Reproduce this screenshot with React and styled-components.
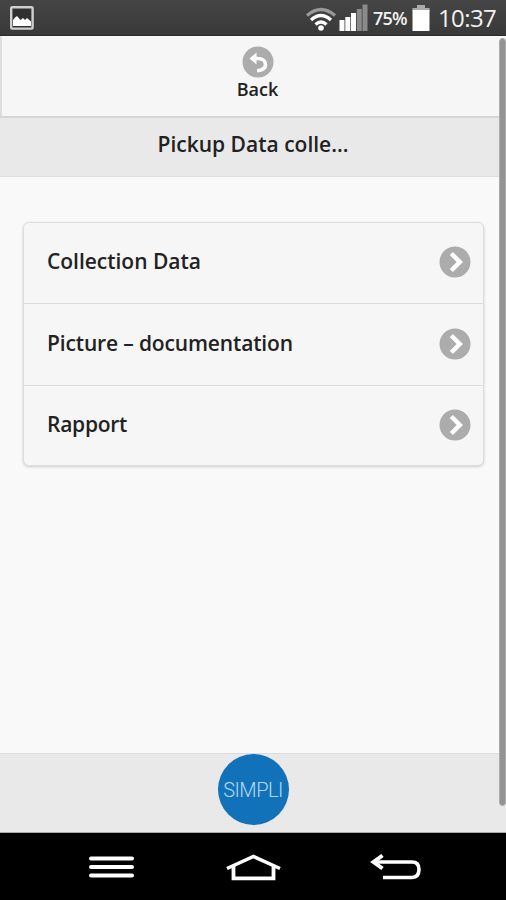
import React from 'react';
import styled, {createGlobalStyle} from 'styled-components';

const GlobalStyle = createGlobalStyle`
  * {
    box-sizing: border-box;
  }

  body {
    margin: 0;
    background: #f9f9f9;
    color: #222;
    font-family: 'Open Sans', 'Noto Sans', sans-serif;
  }
`;

const Screen = styled.div`
  position: relative;
  display: flex;
  flex-direction: column;
  width: 506px;
  height: 900px;
  overflow: hidden;
  background: #f9f9f9;
`;

const StatusBar = styled.header`
  display: flex;
  align-items: center;
  justify-content: space-between;
  height: 36px;
  padding: 0 9px 0 10px;
  background: linear-gradient(#454545, #393939);
  border-bottom: 1px solid #292929;
  color: #f1f1f1;
`;

const StatusGroup = styled.div`
  display: flex;
  align-items: center;
  height: 100%;
`;

const Icon = styled.svg`
  display: block;
  flex: none;
`;

const Text = styled.span`
  display: block;
  font-size: ${props => props.$size}px;
  font-weight: ${props => props.$weight || 600};
  letter-spacing: ${props => props.$spacing || 0}px;
  line-height: ${props => props.$line || 26}px;
  white-space: nowrap;
`;

const Percent = styled(Text)`
  width: 34px;
  margin: 1px 5px 0 5px;
`;

const Clock = styled(Text)`
  width: 59px;
  margin: 1px 0 0 8px;
`;

const BackButton = styled.button`
  display: flex;
  flex-direction: column;
  align-items: center;
  width: 100%;
  height: 80px;
  padding: 9px 0 0 7px;
  border: 0;
  border-top: 1px solid #fcfcfc;
  border-left: 2px solid #dedede;
  background: #f6f6f6;
  color: #222;
  font-family: inherit;
`;

const TitleBar = styled.h1`
  display: flex;
  justify-content: center;
  height: 61px;
  margin: 0;
  padding-top: 13px;
  border-top: 2px solid #d5d5d5;
  border-bottom: 1px solid #dfdfdf;
  background: #e9e9e9;
`;

const Content = styled.main`
  flex: 1;
  padding: 45px 22px 0 23px;
`;

const List = styled.ul`
  margin: 0;
  padding: 0;
  border: 1px solid #dddddd;
  border-radius: 6px;
  background: #f6f6f6;
  box-shadow: 0 1px 3px rgba(0, 0, 0, 0.18);
  list-style: none;
`;

const ListItem = styled.li`
  display: flex;
  align-items: center;
  justify-content: space-between;
  height: ${props => props.$height}px;
  padding: 0 12px 2px 23px;

  & + & {
    border-top: 1px solid #dddddd;
  }
`;

const ItemLabel = styled(Text)`
  padding-bottom: 2px;
`;

const Footer = styled.footer`
  display: flex;
  justify-content: center;
  height: 80px;
  border-top: 1px solid #dcdcdc;
  border-bottom: 1px solid #a8a8a8;
  background: #e9e9e9;
`;

const Logo = styled.div`
  display: flex;
  align-items: center;
  justify-content: center;
  width: 71px;
  height: 71px;
  padding-top: 1px;
  border-radius: 50%;
  background: #1272b9;
  color: #b5d9f4;
  font-family: Roboto, sans-serif;
`;

const NavBar = styled.nav`
  display: flex;
  align-items: center;
  justify-content: space-between;
  height: 67px;
  padding: 0 84px 0 88px;
  background: #000;
`;

const ScrollThumb = styled.div`
  position: absolute;
  top: 38px;
  right: 0;
  width: 7px;
  height: 768px;
  border: 1px solid #ababab;
  border-radius: 4px;
  background: #939393;
`;

const PictureIcon = () => (
  <Icon width="24" height="24" viewBox="0 0 24 24">
    <rect x="1.2" y="1.2" width="21.4" height="21.4" rx="1" fill="#303030" stroke="#cfcfcf" strokeWidth="2.4" />
    <path d="M3 14 5 11.5l2-1.5 3.5 4 2.5-2 2 2 2-2 4 3.500V20H3z" fill="#fff" />
  </Icon>
);

const WifiIcon = () => (
  <Icon width="33" height="36" viewBox="0 0 33 36" fill="none" strokeWidth="3.2">
    <path d="M1 15.5Q15 3.5 29 15.5" stroke="#999" />
    <path d="M5 20Q15 11 25 20M9.5 24.5Q15 19.5 20.5 24.5" stroke="#fff" />
    <circle cx="15" cy="28" r="2.8" fill="#fff" />
  </Icon>
);

const SignalIcon = () => (
  <Icon width="29" height="36" viewBox="0 0 29 36">
    <path d="M.5 20h5v11h-5zM6.3 17h5v14h-5zM12 13h5v18h-5z" fill="#fff" />
    <path d="M17.800 9h5v22h-5zM23.500 4.500h5V31h-5z" fill="#8a8a8a" />
  </Icon>
);

const BatteryIcon = () => (
  <Icon width="18" height="36" viewBox="0 0 18 36">
    <path d="M5 5h8v3h4.5v3H.5V8H5z" fill="#aaa" />
    <path d="M.5 10h17v21H.5z" fill="#fff" />
  </Icon>
);

const BackIcon = () => (
  <Icon width="32" height="32" viewBox="0 0 32 32">
    <circle cx="16" cy="16" r="15.5" fill="#acacac" />
    <path d="M7.5 12.5 14.5 6.500v12z" fill="#fff" />
    <path d="M13 12.500h2.500c5 0 8 2.500 8 6 0 3.500-3.200 5.800-8.500 6.200" fill="none" stroke="#fff" strokeWidth="3.6" />
  </Icon>
);

const ArrowIcon = () => (
  <Icon width="32" height="32" viewBox="0 0 32 32">
    <circle cx="16" cy="16" r="15.5" fill="#acacac" />
    <path d="m12.3 7.5 8.5 8.5-8.5 8.5" fill="none" stroke="#fff" strokeWidth="4.5" />
  </Icon>
);

const MenuIcon = () => (
  <Icon width="47" height="24" viewBox="0 0 47 24" stroke="#fff" strokeLinecap="round">
    <path d="M3 3.5h41M3 12h41M3 20.5h41" strokeWidth="4" />
  </Icon>
);

const HomeIcon = () => (
  <Icon width="56" height="28" viewBox="0 0 56 28" fill="none" stroke="#fff">
    <path d="M2 15.5 28.5 3.5 55 15.5" strokeWidth="3.5" />
    <path d="M8.5 13v12.300h40V13" strokeWidth="3.8" />
  </Icon>
);

const ReturnIcon = () => (
  <Icon width="52" height="28" viewBox="0 0 52 28" fill="none" stroke="#fff">
    <path d="M5 9h37q7 0 7 7.500T42 24.500H13" strokeWidth="3.6" />
    <path d="M12.500 2.500 3.500 9l9 6.500" strokeWidth="4" />
  </Icon>
);

const items = [
  {label: 'Collection Data', spacing: -0.02, height: 80},
  {label: 'Picture – documentation', spacing: -0.15, height: 82},
  {label: 'Rapport', spacing: -0.25, height: 80},
];

export default function App() {
  return (
    <Screen>
      <GlobalStyle />
      <StatusBar>
        <PictureIcon />
        <StatusGroup>
          <WifiIcon />
          <SignalIcon />
          <Percent $size={18} $spacing={-0.8}>75%</Percent>
          <BatteryIcon />
          <Clock $size={24} $weight={500} $spacing={-0.6}>10:37</Clock>
        </StatusGroup>
      </StatusBar>
      <BackButton>
        <BackIcon />
        <Text $size={18} $line={23}>Back</Text>
      </BackButton>
      <TitleBar>
        <Text $size={21}>Pickup Data colle...</Text>
      </TitleBar>
      <Content>
        <List>
          {items.map(item => (
            <ListItem key={item.label} $height={item.height}>
              <ItemLabel $size={21} $spacing={item.spacing}>{item.label}</ItemLabel>
              <ArrowIcon />
            </ListItem>
          ))}
        </List>
      </Content>
      <Footer>
        <Logo>
          <Text $size={20} $weight={300} $spacing={-0.5}>SIMPLI</Text>
        </Logo>
      </Footer>
      <NavBar>
        <MenuIcon />
        <HomeIcon />
        <ReturnIcon />
      </NavBar>
      <ScrollThumb />
    </Screen>
  );
}
